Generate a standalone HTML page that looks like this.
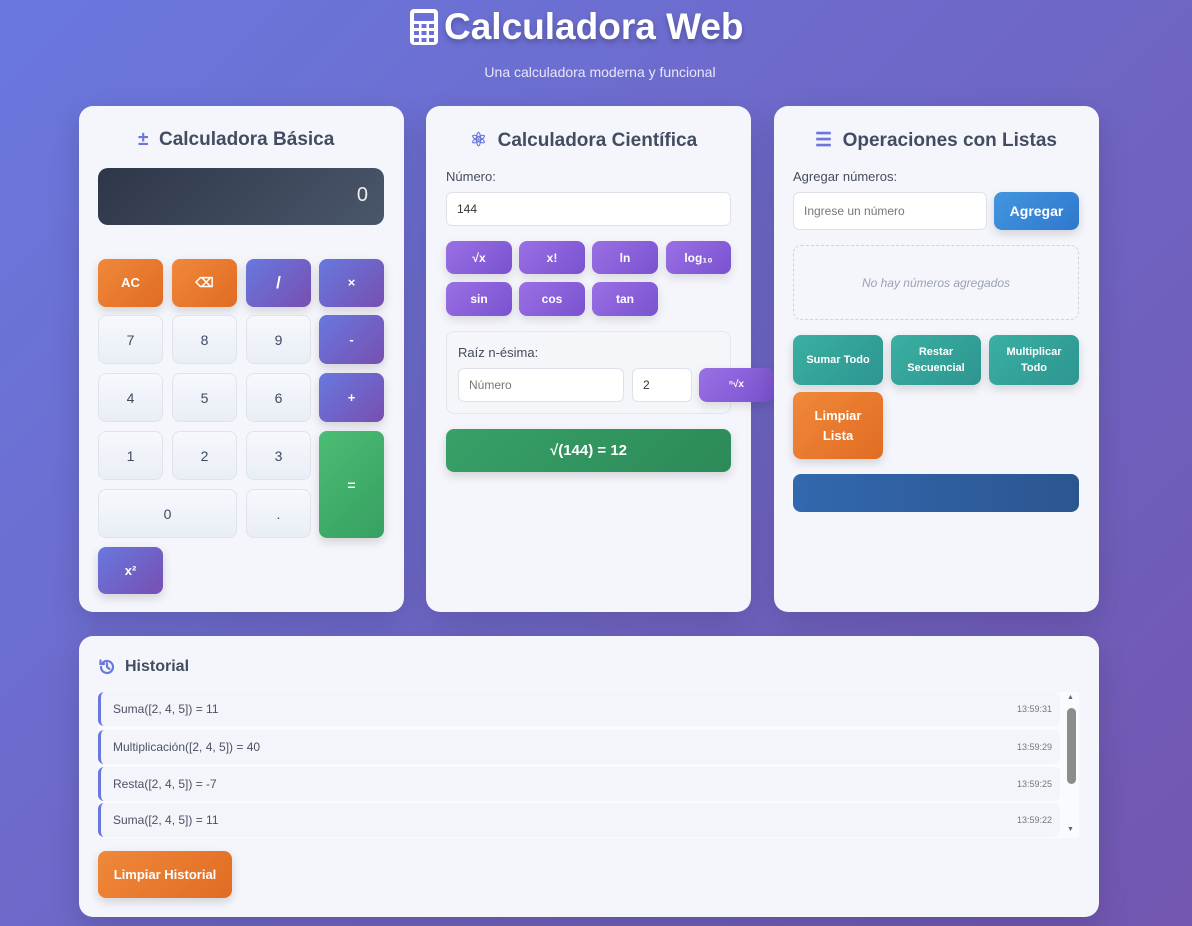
<!DOCTYPE html><html><head><meta charset="utf-8"><style>
*{box-sizing:border-box;margin:0;padding:0}
body{width:1192px;height:926px;overflow:hidden;background:linear-gradient(135deg,#6a78de 0%,#7256b0 100%);font-family:"Liberation Sans",sans-serif;position:relative;color:#3f4a5e}
.a{position:absolute}
.card{position:absolute;background:#f5f6fb;border-radius:14px;box-shadow:0 10px 30px rgba(0,0,0,.15)}
.h2{position:absolute;font-size:19px;font-weight:bold;color:#434d62;white-space:nowrap}
.b{position:absolute;border-radius:8px;display:flex;align-items:center;justify-content:center;font-weight:bold;font-size:13px;color:#fff;text-align:center;line-height:16px}
.or{background:linear-gradient(135deg,#f0883a,#e06c22);box-shadow:0 4px 10px rgba(0,0,0,.15)}
.pu{background:linear-gradient(135deg,#6878e0,#774fb0);box-shadow:0 4px 10px rgba(0,0,0,.15)}
.n{background:linear-gradient(#f6f8fc,#e9eef6);border:1px solid #dfe4ec;color:#3f4a5e;font-weight:normal;font-size:14px}
.gr{background:linear-gradient(135deg,#4cbd74,#36a062);box-shadow:0 4px 10px rgba(0,0,0,.15);font-size:14px}
.sc{background:linear-gradient(135deg,#9a70e4,#7a52d0);box-shadow:0 4px 10px rgba(0,0,0,.12);font-size:12px}
.te{background:linear-gradient(135deg,#3ab0a2,#2d9590);box-shadow:0 4px 10px rgba(0,0,0,.15);font-size:12px}
.in{position:absolute;background:#fff;border:1px solid #dde2ea;border-radius:6px;font-size:12px;color:#333;display:flex;align-items:center;padding-left:10px}
.ph{color:#777}
.lbl{position:absolute;font-size:13px;color:#444c5c}
.it{position:absolute;left:98px;width:962px;height:34px;background:#f4f5fb;border-left:3px solid #6a78de;border-radius:6px;font-size:12px;color:#4a5264;display:flex;align-items:center;justify-content:space-between;padding:0 8px 0 12px}
.it span{font-size:9px;color:#777}
</style></head><body>
<svg class="a" style="left:410px;top:9px" width="28" height="36" viewBox="0 0 28 36"><rect x="0" y="0" width="28" height="36" rx="4" fill="#fff"/><rect x="4" y="4" width="20" height="8" rx="1" fill="#6a70d8"/><g fill="#6a70d8"><rect x="4" y="15" width="5" height="4"/><rect x="11.5" y="15" width="5" height="4"/><rect x="19" y="15" width="5" height="4"/><rect x="4" y="22" width="5" height="4"/><rect x="11.5" y="22" width="5" height="4"/><rect x="19" y="22" width="5" height="4"/><rect x="4" y="29" width="5" height="4"/><rect x="11.5" y="29" width="5" height="4"/><rect x="19" y="29" width="5" height="4"/></g></svg>
<div class="a" style="left:444px;top:6px;font-size:37px;font-weight:bold;color:#fff;text-shadow:0 3px 6px rgba(0,0,0,.25);white-space:nowrap">Calculadora Web</div>
<div class="a" style="left:400px;top:64px;width:400px;text-align:center;color:#e8e6fa;font-size:14px">Una calculadora moderna y funcional</div>

<div class="card" style="left:79px;top:106px;width:325px;height:506px"></div>
<div class="h2" style="left:138px;top:129px"><span style="color:#6a78de">±</span>&nbsp; Calculadora Básica</div>
<div class="a" style="left:98px;top:168px;width:286px;height:57px;border-radius:10px;background:linear-gradient(135deg,#2e3748,#4a566b);color:#eee;font-size:20px;text-align:right;padding:16px 16px 0 0">0</div>
<div class="b or" style="left:98px;top:259px;width:65px;height:48px">AC</div>
<div class="b or" style="left:172px;top:259px;width:65px;height:48px">⌫</div>
<div class="b pu" style="left:246px;top:259px;width:65px;height:48px;font-size:17px">/</div>
<div class="b pu" style="left:319px;top:259px;width:65px;height:48px">×</div>
<div class="b n" style="left:98px;top:315px;width:65px;height:49px">7</div>
<div class="b n" style="left:172px;top:315px;width:65px;height:49px">8</div>
<div class="b n" style="left:246px;top:315px;width:65px;height:49px">9</div>
<div class="b pu" style="left:319px;top:315px;width:65px;height:49px">-</div>
<div class="b n" style="left:98px;top:373px;width:65px;height:49px">4</div>
<div class="b n" style="left:172px;top:373px;width:65px;height:49px">5</div>
<div class="b n" style="left:246px;top:373px;width:65px;height:49px">6</div>
<div class="b pu" style="left:319px;top:373px;width:65px;height:49px">+</div>
<div class="b n" style="left:98px;top:431px;width:65px;height:49px">1</div>
<div class="b n" style="left:172px;top:431px;width:65px;height:49px">2</div>
<div class="b n" style="left:246px;top:431px;width:65px;height:49px">3</div>
<div class="b gr" style="left:319px;top:431px;width:65px;height:107px">=</div>
<div class="b n" style="left:98px;top:489px;width:139px;height:49px">0</div>
<div class="b n" style="left:246px;top:489px;width:65px;height:49px">.</div>
<div class="b pu" style="left:98px;top:547px;width:65px;height:47px">x²</div>

<div class="card" style="left:426px;top:106px;width:325px;height:506px"></div>
<div class="h2" style="left:470px;top:129px"><span style="color:#6a78de">⚛</span>&nbsp; Calculadora Científica</div>
<div class="lbl" style="left:446px;top:169px">Número:</div>
<div class="in" style="left:446px;top:192px;width:285px;height:34px">144</div>
<div class="b sc" style="left:446px;top:241px;width:66px;height:33px">√x</div>
<div class="b sc" style="left:519px;top:241px;width:66px;height:33px">x!</div>
<div class="b sc" style="left:592px;top:241px;width:66px;height:33px">ln</div>
<div class="b sc" style="left:666px;top:241px;width:65px;height:33px">log₁₀</div>
<div class="b sc" style="left:446px;top:282px;width:66px;height:34px">sin</div>
<div class="b sc" style="left:519px;top:282px;width:66px;height:34px">cos</div>
<div class="b sc" style="left:592px;top:282px;width:66px;height:34px">tan</div>
<div class="a" style="left:446px;top:331px;width:285px;height:83px;border:1px solid #e2e6ee;border-radius:8px;background:#f4f6fa"></div>
<div class="lbl" style="left:458px;top:345px">Raíz n-ésima:</div>
<div class="in ph" style="left:458px;top:368px;width:166px;height:34px">Número</div>
<div class="in" style="left:632px;top:368px;width:60px;height:34px">2</div>
<div class="b sc" style="left:699px;top:368px;width:75px;height:34px;font-size:10px">ⁿ√x</div>
<div class="b gr" style="left:446px;top:429px;width:285px;height:43px;background:linear-gradient(135deg,#38a068,#2c8a58);font-size:15px">√(144) = 12</div>

<div class="card" style="left:774px;top:106px;width:325px;height:506px"></div>
<div class="h2" style="left:815px;top:129px"><span style="color:#6a78de">☰</span>&nbsp; Operaciones con Listas</div>
<div class="lbl" style="left:793px;top:169px">Agregar números:</div>
<div class="in ph" style="left:793px;top:192px;width:194px;height:38px">Ingrese un número</div>
<div class="b" style="left:994px;top:192px;width:85px;height:38px;background:linear-gradient(135deg,#4295e0,#2f78cc);font-size:14px;box-shadow:0 4px 10px rgba(0,0,0,.15)">Agregar</div>
<div class="a" style="left:793px;top:245px;width:286px;height:75px;border:1px dashed #cdd3dd;border-radius:8px;display:flex;align-items:center;justify-content:center;font-style:italic;color:#9aa2b2;font-size:12px">No hay números agregados</div>
<div class="b te" style="left:793px;top:335px;width:90px;height:50px;font-size:11px">Sumar Todo</div>
<div class="b te" style="left:891px;top:335px;width:90px;height:50px;font-size:11px">Restar<br>Secuencial</div>
<div class="b te" style="left:989px;top:335px;width:90px;height:50px;font-size:11px">Multiplicar<br>Todo</div>
<div class="b or" style="left:793px;top:392px;width:90px;height:67px;font-size:13px;line-height:20px">Limpiar<br>Lista</div>
<div class="a" style="left:793px;top:474px;width:286px;height:38px;border-radius:8px;background:linear-gradient(90deg,#3268ae,#2c5590)"></div>

<div class="card" style="left:79px;top:636px;width:1020px;height:281px"></div>
<svg class="a" style="left:98px;top:658px" width="18" height="18" viewBox="0 0 18 18" fill="none" stroke="#6a78de" stroke-width="2.2" stroke-linecap="round"><path d="M3 9a6 6 0 1 0 1.8-4.3"/><path d="M2.5 2.5v3.5h3.5"/><path d="M9 5.5V9l2.5 2"/></svg>
<div class="h2" style="left:125px;top:658px;font-size:16px">Historial</div>
<div class="a" style="left:98px;top:692px;width:981px;height:146px;background:#fafbfe"></div>
<div class="it" style="top:692px">Suma([2, 4, 5]) = 11<span>13:59:31</span></div>
<div class="it" style="top:730px">Multiplicación([2, 4, 5]) = 40<span>13:59:29</span></div>
<div class="it" style="top:767px">Resta([2, 4, 5]) = -7<span>13:59:25</span></div>
<div class="it" style="top:803px">Suma([2, 4, 5]) = 11<span>13:59:22</span></div>
<div class="a" style="left:1067px;top:708px;width:9px;height:76px;border-radius:5px;background:#8c8c8c"></div>
<div class="a" style="left:1067px;top:694px;font-size:7px;color:#666">▲</div>
<div class="a" style="left:1067px;top:826px;font-size:7px;color:#666">▼</div>
<div class="b or" style="left:98px;top:851px;width:134px;height:47px;font-size:13px">Limpiar Historial</div>
</body></html>
